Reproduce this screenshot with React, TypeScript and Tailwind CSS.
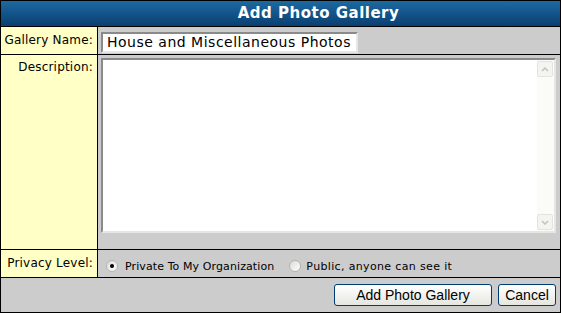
import React, { useState } from "react";

const verdana = { fontFamily: '"DejaVu Sans", Verdana, sans-serif' };
const arial = { fontFamily: '"Liberation Sans", Arial, sans-serif' };

const Radio = ({ checked, onClick }: { checked: boolean; onClick: () => void }) => (
  <span
    onClick={onClick}
    className="inline-flex items-center justify-center w-[12px] h-[12px] rounded-full border border-[#b4b4b4] bg-gradient-to-br from-[#dcdcd6] to-white cursor-pointer"
  >
    {checked && <span className="w-[4px] h-[4px] rounded-full bg-black" />}
  </span>
);

const App = () => {
  const [name, setName] = useState("House and Miscellaneous Photos");
  const [privacy, setPrivacy] = useState("private");

  return (
    <div className="w-[561px] h-[313px] bg-white" style={verdana}>
      <div className="w-[561px] h-[313px] border border-black flex flex-col">
        <div className="h-[26px] bg-gradient-to-b from-[#1c6aa3] to-[#0b3f70] text-white font-bold text-[15px] tracking-[0.5px] flex items-center justify-center pl-[76px] border-b border-black">
          Add Photo Gallery
        </div>

        <div className="grid grid-cols-[97px_1fr] h-[28px] border-b border-black">
          <div className="bg-[#ffffc6] border-r border-black text-[12px] tracking-[0.2px] text-black text-right pr-[4px] pt-[4px]">
            Gallery Name:
          </div>
          <div className="bg-[#cccccc] pl-[3px] pt-[3px]">
            <input
              value={name}
              onChange={(e) => setName(e.target.value)}
              className="w-[257px] h-[21px] bg-white border-2 border-t-[#8a8a8a] border-l-[#8a8a8a] border-r-[#e6e6e6] border-b-[#e6e6e6] text-[14px] tracking-[0.5px] pl-[4px] outline-none"
              style={verdana}
            />
          </div>
        </div>

        <div className="grid grid-cols-[97px_1fr] h-[195px] border-b border-black">
          <div className="bg-[#ffffc6] border-r border-black text-[12px] tracking-[0.2px] text-black text-right pr-[4px] pt-[3px]">
            Description:
          </div>
          <div className="bg-[#cccccc] pl-[3px] pt-[3px] pr-[4px] pb-[16px]">
            <div className="h-full bg-white border-2 border-t-[#8a8a8a] border-l-[#8a8a8a] border-r-[#e6e6e6] border-b-[#e6e6e6] flex">
              <textarea className="flex-1 resize-none outline-none text-[13px] p-[2px]" style={verdana} />
              <div className="w-[17px] bg-[#fbfbf7] flex flex-col justify-between py-[1px] pr-[1px]">
                <div className="h-[16px] border border-[#e4e4dc] rounded-[2px] bg-[#f4f4f0] flex items-center justify-center">
                  <svg width="8" height="5" viewBox="0 0 8 5">
                    <path d="M1 4 L4 1 L7 4" stroke="#c4c4bc" strokeWidth="1.5" fill="none" />
                  </svg>
                </div>
                <div className="h-[16px] border border-[#e4e4dc] rounded-[2px] bg-[#f4f4f0] flex items-center justify-center">
                  <svg width="8" height="5" viewBox="0 0 8 5">
                    <path d="M1 1 L4 4 L7 1" stroke="#c4c4bc" strokeWidth="1.5" fill="none" />
                  </svg>
                </div>
              </div>
            </div>
          </div>
        </div>

        <div className="grid grid-cols-[97px_1fr] h-[28px] border-b border-black">
          <div className="bg-[#ffffc6] border-r border-black text-[12px] tracking-[0.2px] text-black text-right pr-[4px] pt-[4px]">
            Privacy Level:
          </div>
          <div className="bg-[#cccccc] flex items-center pl-[8px] pt-[5px] text-[11px] text-black">
            <Radio checked={privacy === "private"} onClick={() => setPrivacy("private")} />
            <span className="ml-[7px] mr-[15px] pt-[3px] tracking-[0.1px]">Private To My Organization</span>
            <Radio checked={privacy === "public"} onClick={() => setPrivacy("public")} />
            <span className="ml-[5px] pt-[3px] tracking-[0.35px]">Public, anyone can see it</span>
          </div>
        </div>

        <div className="flex-1 bg-[#cccccc] flex items-center justify-end gap-[6px] pr-[4px]">
          <button
            className="w-[158px] h-[22px] rounded-[3px] border border-[#003c74] bg-gradient-to-b from-white to-[#e6e6e0] text-[14px] text-black"
            style={arial}
          >
            Add Photo Gallery
          </button>
          <button
            className="w-[58px] h-[22px] rounded-[3px] border border-[#003c74] bg-gradient-to-b from-white to-[#e6e6e0] text-[14px] text-black"
            style={arial}
          >
            Cancel
          </button>
        </div>
      </div>
    </div>
  );
};

export default App;
